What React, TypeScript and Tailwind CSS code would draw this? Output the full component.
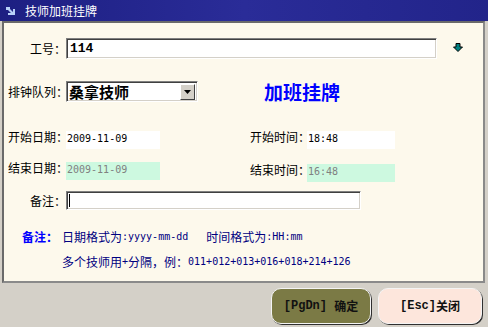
import React from "react";

const sunken =
  "border border-t-[#808080] border-l-[#808080] border-b-white border-r-white shadow-[inset_1px_1px_0_#404040,inset_-1px_-1px_0_#d4d0c8]";

function Label({ text, w }: { text: string; w: string }) {
  return (
    <div className={`${w} shrink-0 whitespace-nowrap text-[12px] leading-[14px]`}>{text}</div>
  );
}

export default function App() {
  return (
    <div className="w-[488px] h-[327px] bg-[#d4d0c8] overflow-hidden flex flex-col font-['Noto_Sans_CJK_SC',sans-serif] text-[12px] text-black">
      {/* title bar */}
      <div className="h-[21px] shrink-0 flex items-center bg-gradient-to-r from-[#1d1f82] via-[#2a2c98] to-[#22248a]">
        <svg width="9" height="8" viewBox="0 0 9 8" className="ml-[6px]">
          <polygon points="0,0 4,0 4,2 7,5 7,2 9,2 9,8 2,8 2,6 5,6 2,3 0,3" fill="#b8d0f8" />
        </svg>
        <span className="ml-[10px] text-white text-[12px] leading-none">技师加班挂牌</span>
      </div>

      {/* panel */}
      <div className="ml-[2px] w-[483px] h-[262px] shrink-0 bg-[#fdf9ec] border-2 border-t-[#6a6a6a] border-l-[#6a6a6a] border-b-[#8a8a8a] border-r-[#8a8a8a] flex flex-col">
        {/* row 1 */}
        <div className="mt-[15px] h-[21px] flex items-center">
          <div className="w-[62px] shrink-0 text-right text-[12px] leading-[14px] whitespace-nowrap">工号：</div>
          <div className={`w-[371px] h-[21px] bg-white ${sunken} flex items-center pl-[3px]`}>
            <span className="font-['Liberation_Mono',monospace] font-bold text-[13px] leading-none">114</span>
          </div>
          <svg width="10" height="9" viewBox="0 0 10 9" className="ml-[16px] mt-[-2px]">
            <polygon points="3,0.5 7,0.5 7,4 9.5,4 5,8.5 0.5,4 3,4" fill="#008080" stroke="#000" strokeWidth="1" />
          </svg>
        </div>

        {/* row 2 */}
        <div className="mt-[22px] h-[21px] flex items-center">
          <div className="w-[62px] shrink-0 whitespace-nowrap text-[12px] leading-[14px] pl-[4px]">排钟队列：</div>
          <div className={`w-[132px] h-[21px] bg-white ${sunken} flex items-center justify-between pl-[2px] pr-[2px]`}>
            <span className="font-bold text-[15px] leading-none">桑拿技师</span>
            <div className="w-[15px] h-[16px] bg-[#d4d0c8] border border-t-white border-l-white border-b-[#404040] border-r-[#404040] flex items-center justify-center">
              <svg width="7" height="4" viewBox="0 0 7 4">
                <polygon points="0,0 7,0 3.5,4" fill="#000" />
              </svg>
            </div>
          </div>
          <span className="ml-[66px] text-[#0000ff] font-bold text-[19px] leading-none">加班挂牌</span>
        </div>

        {/* row 3 */}
        <div className="mt-[29px] h-[18px] flex items-start">
          <div className="w-[62px] shrink-0 whitespace-nowrap text-[12px] leading-[14px] pl-[4px] mt-[-1px]">开始日期：</div>
          <div className="w-[94px] h-[18px] bg-white pl-[1px] pt-[2px] font-['DejaVu_Sans_Mono',monospace] text-[10px] leading-[12px]">2009-11-09</div>
          <div className="ml-[90px] w-[57px] shrink-0 whitespace-nowrap text-[12px] leading-[14px] mt-[-1px]">开始时间：</div>
          <div className="w-[88px] h-[18px] bg-white pl-[1px] pt-[2px] font-['DejaVu_Sans_Mono',monospace] text-[10px] leading-[12px]">18:48</div>
        </div>

        {/* row 4 */}
        <div className="mt-[13px] h-[18px] flex items-start">
          <div className="w-[62px] shrink-0 whitespace-nowrap text-[12px] leading-[14px] pl-[4px] mt-[-1px]">结束日期：</div>
          <div className="w-[94px] h-[18px] bg-[#cdf9e0] pl-[1px] pt-[2px] text-[#808080] font-['DejaVu_Sans_Mono',monospace] text-[10px] leading-[12px]">2009-11-09</div>
          <div className="ml-[90px] w-[57px] shrink-0 whitespace-nowrap text-[12px] leading-[14px] mt-[1px]">结束时间：</div>
          <div className="mt-[2px] w-[88px] h-[18px] bg-[#cdf9e0] pl-[1px] pt-[2px] text-[#808080] font-['DejaVu_Sans_Mono',monospace] text-[10px] leading-[12px]">16:48</div>
        </div>

        {/* row 5 */}
        <div className="mt-[11px] h-[19px] flex items-center">
          <div className="w-[62px] shrink-0 text-right whitespace-nowrap text-[12px] leading-[14px]">备注：</div>
          <div className={`w-[295px] h-[19px] bg-white ${sunken} flex items-center pl-[2px]`}>
            <div className="w-[1px] h-[13px] bg-black" />
          </div>
        </div>

        {/* row 6 */}
        <div className="mt-[20px] h-[14px] flex items-center pl-[18px] text-[#000080] whitespace-nowrap">
          <span className="w-[40px] shrink-0 font-bold text-[#0000ff] text-[12px] leading-[14px]">备注：</span>
          <span className="text-[12px] leading-[14px]">日期格式为</span>
          <span className="font-['DejaVu_Sans_Mono',monospace] text-[10px] leading-[14px] whitespace-pre">:yyyy-mm-dd   </span>
          <span className="text-[12px] leading-[14px]">时间格式为</span>
          <span className="font-['DejaVu_Sans_Mono',monospace] text-[10px] leading-[14px]">:HH:mm</span>
        </div>

        {/* row 7 */}
        <div className="mt-[11px] h-[14px] flex items-center pl-[58px] text-[#000080] whitespace-nowrap">
          <span className="text-[12px] leading-[14px]">多个技师用</span>
          <span className="font-['DejaVu_Sans_Mono',monospace] text-[10px] leading-[14px]">+</span>
          <span className="text-[12px] leading-[14px]">分隔，例：</span>
          <span className="font-['DejaVu_Sans_Mono',monospace] text-[10px] leading-[14px]">011+012+013+016+018+214+126</span>
        </div>
      </div>

      {/* buttons */}
      <div className="mt-[5px] flex justify-end gap-[7px] pr-[6px]">
        <div className="w-[100px] h-[36px] rounded-[10px] bg-[#7b7a45] border border-[#f4f4f4] shadow-[1px_1px_0_#303030] flex items-center justify-center font-bold text-[#111] whitespace-pre">
          <span className="font-['Liberation_Mono',monospace] text-[12px]">[PgDn] </span>
          <span className="text-[12px]">确定</span>
        </div>
        <div className="w-[104px] h-[36px] rounded-[10px] bg-[#fde6dc] border border-[#f4f4f4] shadow-[1px_1px_0_#303030] flex items-center justify-center font-bold text-[#111]">
          <span className="font-['Liberation_Mono',monospace] text-[12px]">[Esc]</span>
          <span className="text-[12px]">关闭</span>
        </div>
      </div>
    </div>
  );
}
